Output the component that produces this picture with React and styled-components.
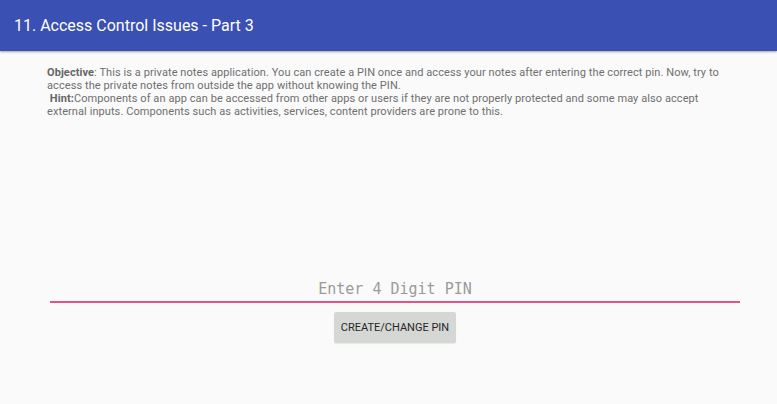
import React from "react";
import styled, { createGlobalStyle } from "styled-components";

const Global = createGlobalStyle`
  html, body { margin: 0; padding: 0; background: #fafafa; }
  body { font-family: Roboto, "Noto Sans", sans-serif; }
`;

const Page = styled.div`
  width: 777px;
  height: 404px;
  background: #fafafa;
  display: flex;
  flex-direction: column;
  overflow: hidden;
`;

const AppBar = styled.header`
  height: 51px;
  background: #3a50b2;
  display: flex;
  align-items: center;
  padding-left: 14px;
  box-shadow: 0 1px 2px rgba(0,0,0,0.35);
  position: relative;
  z-index: 1;
  flex-shrink: 0;
`;

const Title = styled.h1`
  margin: 0;
  font-family: Roboto, sans-serif;
  font-weight: 400;
  font-size: 16px;
  color: #ffffff;
  padding-bottom: 1px;
`;

const Content = styled.main`
  flex: 1;
  display: flex;
  flex-direction: column;
  padding: 15px 0 0 47px;
`;

const Para = styled.p`
  margin: 0;
  width: 688px;
  font-size: 11px;
  line-height: 13px;
  letter-spacing: 0.08px;
  color: #6f6f6f;
  font-family: Roboto, sans-serif;
`;

const Bold = styled.b`
  font-weight: 700;
  color: #666;
`;

const Form = styled.div`
  margin-top: 160px;
  width: 690px;
  display: flex;
  flex-direction: column;
  align-items: center;
  margin-left: 3px;
`;

const PinInput = styled.input`
  width: 690px;
  box-sizing: border-box;
  border: none;
  border-bottom: 2px solid #ec4f86;
  background: transparent;
  outline: none;
  text-align: center;
  font-family: "DejaVu Sans Mono", monospace;
  font-size: 15px;
  height: 25px;
  padding: 0 0 2px 0;
  color: #333;
  &::placeholder { color: #9b9b9b; }
`;

const Button = styled.button`
  margin-top: 9px;
  width: 122px;
  height: 31px;
  border: none;
  border-radius: 2px;
  background: #d5d7d5;
  font-family: Roboto, sans-serif;
  font-size: 11px;
  color: #262626;
  padding: 0;
  box-shadow: 0 1px 1px rgba(0,0,0,0.08);
`;

export default function App() {
  return (
    <Page>
      <Global />
      <AppBar>
        <Title>11. Access Control Issues - Part 3</Title>
      </AppBar>
      <Content>
        <Para>
          <Bold>Objective</Bold>: This is a private notes application. You can create a PIN once and access your notes after entering the correct pin. Now, try to access the private notes from outside the app without knowing the PIN.
          <br />
          &nbsp;<Bold>Hint:</Bold>Components of an app can be accessed from other apps or users if they are not properly protected and some may also accept external inputs. Components such as activities, services, content providers are prone to this.
        </Para>
        <Form>
          <PinInput placeholder="Enter 4 Digit PIN" />
          <Button>CREATE/CHANGE PIN</Button>
        </Form>
      </Content>
    </Page>
  );
}
